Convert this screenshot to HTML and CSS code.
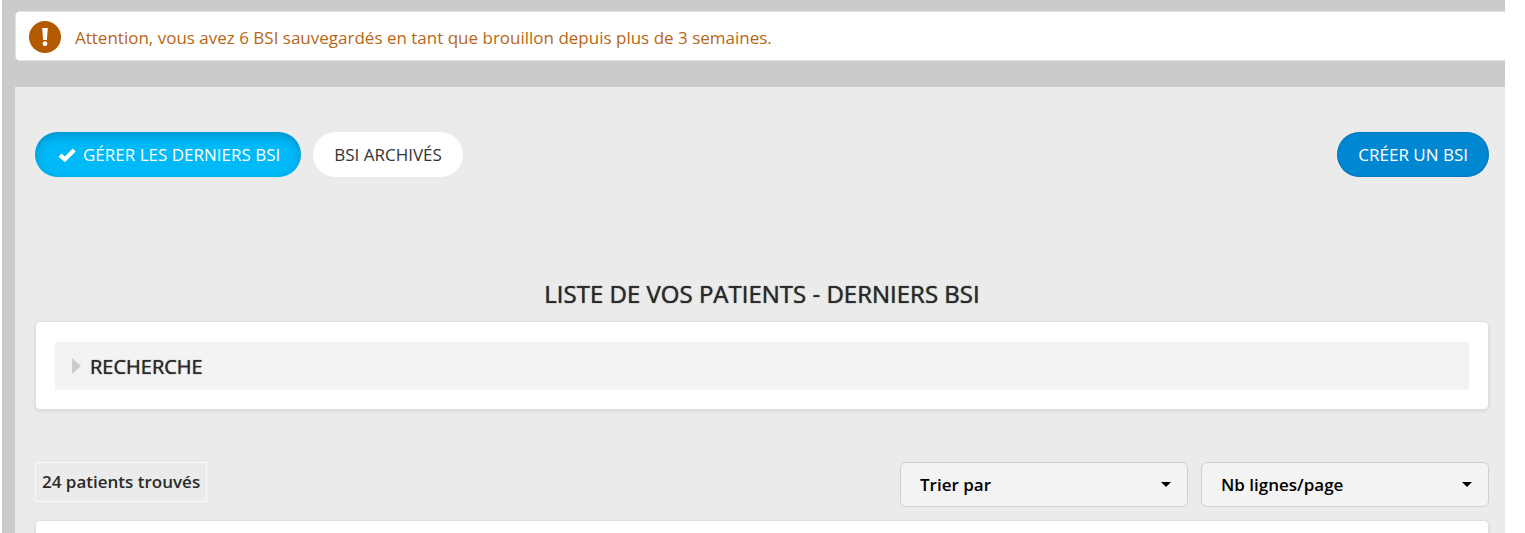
FILE: index.html
```html
<!DOCTYPE html>
<html lang="fr">
<head>
<meta charset="UTF-8">
<meta name="viewport" content="width=device-width, initial-scale=1.0">
<title>Liste de vos patients - Derniers BSI</title>
<link rel="stylesheet" href="styles.css">
</head>
<body>

<div class="page">
    <div class="alert" role="alert">
        <svg class="alert-icon" viewBox="0 0 32 32" aria-hidden="true">
            <circle cx="16" cy="16" r="16" fill="#b35900"/>
            <path d="M13.2 7h5.6l-.9 12h-3.8z" fill="#fff"/>
            <circle cx="16" cy="22.7" r="2.4" fill="#fff"/>
        </svg>
        <p>Attention, vous avez 6 BSI sauvegardés en tant que brouillon depuis plus de 3 semaines.</p>
    </div>

    <main class="content">
        <div class="actions">
            <button type="button" class="btn btn-active">
                <svg class="check" viewBox="0 0 18 14" aria-hidden="true">
                    <path d="M2 7.2l4.8 4.2L16.2 2" fill="none" stroke="#fff" stroke-width="4.2"/>
                </svg>
                GÉRER LES DERNIERS BSI
            </button>
            <button type="button" class="btn">BSI ARCHIVÉS</button>
            <button type="button" class="btn btn-create">CRÉER UN BSI</button>
        </div>

        <h1>LISTE DE VOS PATIENTS - DERNIERS BSI</h1>

        <div class="card">
            <button type="button" class="search-toggle" aria-expanded="false">
                <svg class="arrow" viewBox="0 0 9 16" aria-hidden="true">
                    <path d="M0 0l9 8-9 8z" fill="#ccc"/>
                </svg>
                RECHERCHE
            </button>
        </div>

        <div class="toolbar">
            <p class="count">24 patients trouvés</p>
            <div class="filters">
                <select class="filter" aria-label="Trier par">
                    <option>Trier par</option>
                </select>
                <select class="filter" aria-label="Nb lignes/page">
                    <option>Nb lignes/page</option>
                </select>
            </div>
        </div>

        <div class="card"></div>
    </main>
</div>

</body>
</html>
```
FILE: styles.css
```css
* {
    box-sizing: border-box;
}

body {
    margin: 0;
    background-color: #fff;
    color: #2a2a2a;
    font-family: "Open Sans", sans-serif;
    font-size: 17px;
}

p {
    margin: 0;
}

button,
select {
    font-family: inherit;
    font-size: 17px;
    cursor: pointer;
}

.page {
    display: flex;
    flex-direction: column;
    gap: 26px;
    height: 100vh;
    margin: 0 20px 0 2px;
    padding: 11px 0 0 13px;
    background-color: #cbcbcb;
    overflow: hidden;
}

.alert {
    display: flex;
    flex-shrink: 0;
    align-items: center;
    gap: 14px;
    height: 50px;
    padding: 2px 13px 0;
    background-color: #fff;
    border: 1px solid #e4e4e4;
    border-right: none;
    border-radius: 5px 0 0 5px;
    color: #b86614;
}

.alert-icon {
    width: 32px;
    height: 32px;
}

.content {
    flex: 1;
    padding: 45px 16px 0 20px;
    background-color: #ebebeb;
}

.actions {
    display: flex;
    gap: 12px;
    margin-bottom: 100px;
}

.btn {
    display: flex;
    align-items: center;
    gap: 7px;
    height: 45px;
    padding: 0 21px;
    border: none;
    border-radius: 23px;
    background-color: #fff;
    color: #333;
}

.btn-active {
    padding: 0 21px 0 23px;
    background-color: #00b9f7;
    box-shadow: inset 0 4px 10px rgba(0, 60, 110, 0.3);
    color: #fff;
}

.btn-create {
    margin-left: auto;
    background-color: #0087d2;
    box-shadow: inset 0 0 2px rgba(0, 50, 100, 0.6);
    color: #fff;
}

.check {
    width: 18px;
    height: 14px;
}

h1 {
    margin: 0 0 10px;
    font-size: 24px;
    font-weight: 400;
    line-height: 34px;
    text-align: center;
    text-shadow: 0 0 1px #2a2a2a;
}

.card {
    min-height: 88px;
    padding: 20px 19px 19px;
    background-color: #fff;
    border: 1px solid #e0e0e0;
    border-radius: 5px;
    box-shadow: 0 1px 3px rgba(0, 0, 0, 0.1);
}

.search-toggle {
    display: flex;
    align-items: center;
    gap: 9px;
    width: 100%;
    height: 48px;
    padding: 0 17px;
    border: none;
    background-color: #f3f3f3;
    color: #2a2a2a;
    font-size: 20px;
    text-shadow: 0 0 1px #2a2a2a;
}

.arrow {
    width: 9px;
    height: 16px;
}

.toolbar {
    display: flex;
    align-items: flex-start;
    justify-content: space-between;
    margin: 52px 0 13px;
}

.count {
    padding: 0 6px;
    border: 1px solid #fafafa;
    font-weight: 600;
    line-height: 38px;
}

.filters {
    display: flex;
    gap: 13px;
}

.filter {
    width: 288px;
    height: 45px;
    padding: 0 19px;
    appearance: none;
    border: 1px solid #d0d0d0;
    border-radius: 6px;
    background: #f3f3f3 url("data:image/svg+xml,%3Csvg xmlns='http://www.w3.org/2000/svg' width='10' height='5'%3E%3Cpath d='M0 0h10L5 5z'/%3E%3C/svg%3E") no-repeat right 16px center;
    color: #000;
    font-weight: 600;
}
```
